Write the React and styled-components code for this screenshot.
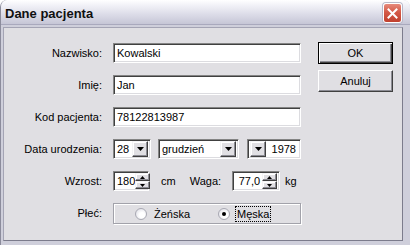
import React from 'react';
import styled, { createGlobalStyle } from 'styled-components';

const GlobalStyle = createGlobalStyle`
html, body {
  margin: 0;
  padding: 0;
  background: #ffffff;
}
body {
  font-family: "Liberation Sans", Arial, sans-serif;
  font-size: 11px;
  color: #000;
}
`;

const Window = styled.div`
width: 410px;
height: 245px;
box-sizing: border-box;
display: flex;
flex-direction: column;
background: #cfcfdb;
border-left: 1px solid #8c8c9c;
border-radius: 7px 7px 0 0;
overflow: hidden;
`;

const TitleBar = styled.div`
height: 24px;
flex: none;
display: flex;
align-items: center;
justify-content: space-between;
padding: 0 8px 0 4px;
background: linear-gradient(#ffffff 0%, #f0f0f6 25%, #dcdce8 60%, #c6c6d6 100%);
border-bottom: 1px solid #a9a9bd;
`;

const Title = styled.span`
font-family: "Liberation Sans", Arial, sans-serif;
font-weight: bold;
font-size: 13px;
color: #101010;
padding-top: 2px;
`;

const CloseButton = styled.div`
width: 19px;
height: 20px;
margin-top: 2px;
box-sizing: border-box;
border: 1px solid #ffffff;
border-radius: 3px;
background: linear-gradient(#e68a7c 0%, #d45a48 45%, #c0402e 100%);
box-shadow: 0 0 0 1px #b8b8c8;
display: flex;
align-items: center;
justify-content: center;
`;

const Client = styled.div`
flex: 1;
display: flex;
margin: 2px 7px 4px 2px;
background: #e0dfe3;
border-top: 1px solid #a4a4b4;
border-left: 1px solid #a4a4b4;
border-bottom: 1px solid #7c7c8c;
border-right: 1px solid #7c7c8c;
`;

const Form = styled.div`
display: grid;
grid-template-columns: 88px 188px;
grid-auto-rows: 20px;
column-gap: 11px;
row-gap: 12px;
padding: 15px 0 0 10px;
`;

const Label = styled.div`
display: flex;
align-items: center;
justify-content: flex-end;
white-space: nowrap;
`;

const Sunken = styled.div`
box-sizing: border-box;
height: 20px;
width: ${p => p.$w ? `${p.$w}px` : '100%'};
margin-left: ${p => p.$ml || 0}px;
background: #ffffff;
border: 1px solid;
border-color: #848484 #ffffff #ffffff #848484;
box-shadow: inset 1px 1px #404040, inset -1px -1px #dcdce0;
display: flex;
align-items: center;
padding: 0 2px 0 3px;
flex: none;
`;

const Value = styled.span`
flex: 1;
text-align: ${p => p.$right ? 'right' : 'left'};
padding-right: ${p => p.$right ? '2px' : '0'};
white-space: nowrap;
`;

const Raised = styled.div`
box-sizing: border-box;
background: #e0dfe3;
border: 1px solid;
border-color: #f4f4f6 #404040 #404040 #f4f4f6;
box-shadow: inset -1px -1px #8c8c94, inset 1px 1px #ffffff;
display: flex;
align-items: center;
justify-content: center;
`;

const DropButton = styled(Raised)`
width: 16px;
height: 16px;
flex: none;
margin-left: ${p => p.$left ? '-1px' : '0'};
`;

const SpinColumn = styled.div`
display: flex;
flex-direction: column;
width: 15px;
height: 16px;
flex: none;
`;

const SpinButton = styled(Raised)`
height: 8px;
`;

const InlineRow = styled.div`
display: flex;
align-items: center;
`;

const Unit = styled.span`
margin-left: ${p => p.$ml || 0}px;
white-space: nowrap;
`;

const GroupBox = styled.div`
box-sizing: border-box;
height: 21px;
border: 1px solid #a2a2aa;
box-shadow: inset 1px 1px #ffffff, 1px 1px #ffffff;
display: flex;
align-items: center;
padding-left: 21px;
`;

const RadioItem = styled.label`
display: flex;
align-items: center;
gap: 5px;
margin-left: ${p => p.$ml || 0}px;
`;

const RadioCircle = styled.span`
width: 12px;
height: 12px;
box-sizing: border-box;
border-radius: 50%;
border: 1px solid #a9a9b3;
background: radial-gradient(circle at 60% 60%, #ffffff 30%, #e6e6ec 75%, #cfcfd8 100%);
display: flex;
align-items: center;
justify-content: center;
&::after {
  content: '';
  width: 4px;
  height: 4px;
  border-radius: 50%;
  background: ${p => p.$checked ? '#000' : 'transparent'};
}
`;

const RadioText = styled.span`
padding: 1px 1px;
border: 1px dotted ${p => p.$focus ? '#000' : 'transparent'};
`;

const ButtonColumn = styled.div`
display: flex;
flex-direction: column;
gap: 6px;
padding: 14px 0 0 17px;
`;

const DialogButton = styled.div`
box-sizing: border-box;
width: 75px;
height: 22px;
display: flex;
align-items: center;
justify-content: center;
background: #e0dfe3;
border: 1px solid;
border-color: ${p => p.$default ? '#000' : '#ffffff #404040 #404040 #ffffff'};
box-shadow: ${p => p.$default
    ? 'inset 1px 1px #ffffff, inset -1px -1px #404040, inset -2px -2px #8c8c94'
    : 'inset -1px -1px #8c8c94'};
`;

const DownArrow = () => (
    <svg width="7" height="4" viewBox="0 0 7 4">
        <polygon points="0,0 7,0 3.5,4" fill="#000" />
    </svg>
);

const UpArrow = () => (
    <svg width="5" height="3" viewBox="0 0 5 3">
        <polygon points="0,3 5,3 2.5,0" fill="#000" />
    </svg>
);

const SmallDown = () => (
    <svg width="5" height="3" viewBox="0 0 5 3">
        <polygon points="0,0 5,0 2.5,3" fill="#000" />
    </svg>
);

const Spinner = () => (
    <SpinColumn>
        <SpinButton><UpArrow /></SpinButton>
        <SpinButton><SmallDown /></SpinButton>
    </SpinColumn>
);

const App = () => {
    return (
        <>
            <GlobalStyle />
            <Window>
                <TitleBar>
                    <Title>Dane pacjenta</Title>
                    <CloseButton>
                        <svg width="11" height="11" viewBox="0 0 11 11">
                            <path d="M1.5 1.5 L9.5 9.5 M9.5 1.5 L1.5 9.5" stroke="#fff" strokeWidth="2" strokeLinecap="square" />
                        </svg>
                    </CloseButton>
                </TitleBar>
                <Client>
                    <Form>
                        <Label>Nazwisko:</Label>
                        <Sunken><Value>Kowalski</Value></Sunken>

                        <Label>Imię:</Label>
                        <Sunken><Value>Jan</Value></Sunken>

                        <Label>Kod pacjenta:</Label>
                        <Sunken><Value>78122813987</Value></Sunken>

                        <Label>Data urodzenia:</Label>
                        <InlineRow>
                            <Sunken $w={38}>
                                <Value>28</Value>
                                <DropButton><DownArrow /></DropButton>
                            </Sunken>
                            <Sunken $w={81} $ml={7}>
                                <Value>grudzień</Value>
                                <DropButton><DownArrow /></DropButton>
                            </Sunken>
                            <Sunken $w={54} $ml={8}>
                                <DropButton $left><DownArrow /></DropButton>
                                <Value $right>1978</Value>
                            </Sunken>
                        </InlineRow>

                        <Label>Wzrost:</Label>
                        <InlineRow>
                            <Sunken $w={36}>
                                <Value>180</Value>
                                <Spinner />
                            </Sunken>
                            <Unit $ml={12}>cm</Unit>
                            <Unit $ml={14}>Waga:</Unit>
                            <Sunken $w={48} $ml={11}>
                                <Value $right>77,0</Value>
                                <Spinner />
                            </Sunken>
                            <Unit $ml={5}>kg</Unit>
                        </InlineRow>

                        <Label>Płeć:</Label>
                        <GroupBox>
                            <RadioItem>
                                <RadioCircle />
                                <RadioText>Żeńska</RadioText>
                            </RadioItem>
                            <RadioItem $ml={26}>
                                <RadioCircle $checked />
                                <RadioText $focus>Męska</RadioText>
                            </RadioItem>
                        </GroupBox>
                    </Form>
                    <ButtonColumn>
                        <DialogButton $default>OK</DialogButton>
                        <DialogButton>Anuluj</DialogButton>
                    </ButtonColumn>
                </Client>
            </Window>
        </>
    );
}

export default App;
